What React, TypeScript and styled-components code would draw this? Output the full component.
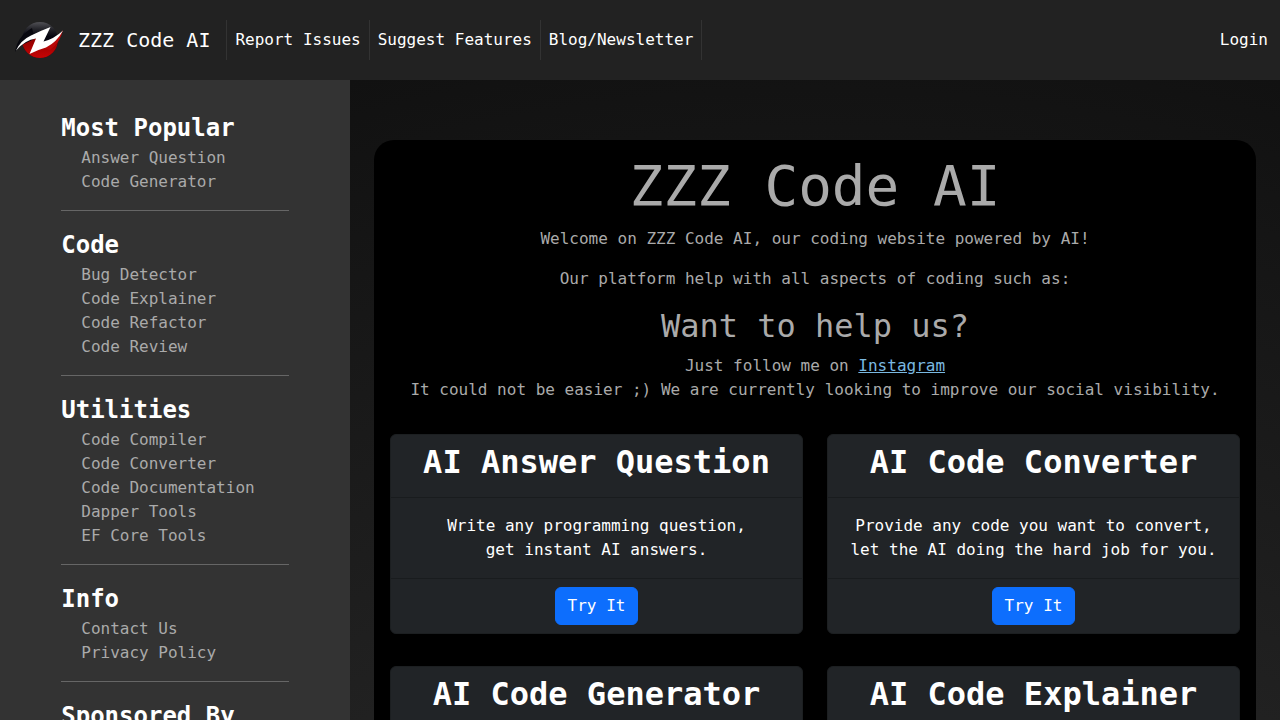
import React from "react";
import styled, { createGlobalStyle } from "styled-components";

const GlobalStyle = createGlobalStyle`
  *, *::before, *::after { box-sizing: border-box; }
  body {
    margin: 0;
    background: #111;
    color: #aaa;
    font-family: "DejaVu Sans Mono", "Liberation Mono", monospace;
    font-size: 16px;
    line-height: 24px;
  }
  h1, h2, h3, p, ul { margin: 0; padding: 0; font-weight: 400; }
  ul { list-style: none; }
`;

const Page = styled.div`
  display: flex;
  flex-direction: column;
  min-height: 100vh;
`;

const Header = styled.header`
  display: flex;
  flex: none;
  align-items: center;
  padding: 20px 12px 20px 14px;
  background: #222;
`;

const Brand = styled.a`
  display: flex;
  align-items: center;
  gap: 12px;
  margin-right: 16px;
  color: #fff;
  font-size: 20px;
  line-height: 23px;
  text-decoration: none;
`;

const Logo = styled.svg`
  display: block;
  width: 52px;
  height: 40px;
`;

const NavList = styled.ul`
  display: flex;
  flex: 1;
`;

const NavItem = styled.li`
  border-right: 1px solid #333;
  &:first-child { border-left: 1px solid #333; }
`;

const NavLink = styled.a`
  display: block;
  padding: 8px;
  color: #fff;
  text-decoration: none;
`;

const LoginLink = styled.a`
  color: #fff;
  text-decoration: none;
`;

const Columns = styled.div`
  display: flex;
  flex: 1;
  align-items: stretch;
`;

const Sidebar = styled.nav`
  flex: none;
  width: 350px;
  padding: 30px 0;
  background: #333;
`;

const MenuSection = styled.section`
  width: 65%;
  margin: 0 auto;
  & + & {
    margin-top: 16px;
    padding-top: 16px;
    border-top: 1px solid #666;
  }
`;

const MenuTitle = styled.h2`
  color: #fff;
  font-size: 24px;
  font-weight: 700;
  line-height: 36px;
`;

const MenuList = styled.ul`
  padding-left: 20px;
`;

const MenuLink = styled.a`
  color: #aaa;
  text-decoration: none;
`;

const Main = styled.main`
  flex: 1;
  min-width: 0;
  padding: 60px 24px;
  background: radial-gradient(circle 1666px at 50% 1600px, #3d3d3d, #111);
`;

const Panel = styled.div`
  padding: 12px 16px 32px;
  border-radius: 20px;
  background: #000;
  text-align: center;
`;

const Title = styled.h1`
  margin-bottom: 8px;
  font-size: 56px;
  line-height: 67px;
`;

const Subtitle = styled.h2`
  margin-bottom: 8px;
  font-size: 32px;
  line-height: 39px;
`;

const Paragraph = styled.p`
  margin-bottom: 16px;
`;

const TextLink = styled.a`
  color: #7ab8e0;
`;

const CardGrid = styled.div`
  display: grid;
  grid-template-columns: repeat(2, minmax(0, 1fr));
  gap: 32px 24px;
  margin-top: 32px;
`;

const CardBox = styled.article`
  border: 1px solid #1c1f21;
  border-radius: 6px;
  background: #212427;
  color: #fff;
`;

const CardHeader = styled.div`
  padding: 8px 16px 16px;
  border-bottom: 1px solid #191c1e;
`;

const CardTitle = styled.h3`
  font-size: 32px;
  font-weight: 700;
  line-height: 38px;
`;

const CardBody = styled.p`
  padding: 16px 8px;
`;

const CardFooter = styled.div`
  padding: 8px 16px;
  border-top: 1px solid #191c1e;
`;

const TryButton = styled.button`
  display: inline-block;
  padding: 6px 12px;
  border: 1px solid #0d6efd;
  border-radius: 6px;
  background: #0d6efd;
  color: #fff;
  font: inherit;
  vertical-align: top;
  cursor: pointer;
`;

const navItems = ["Report Issues", "Suggest Features", "Blog/Newsletter"];

const menu = [
  { title: "Most Popular", links: ["Answer Question", "Code Generator"] },
  { title: "Code", links: ["Bug Detector", "Code Explainer", "Code Refactor", "Code Review"] },
  {
    title: "Utilities",
    links: ["Code Compiler", "Code Converter", "Code Documentation", "Dapper Tools", "EF Core Tools"],
  },
  { title: "Info", links: ["Contact Us", "Privacy Policy"] },
  { title: "Sponsored By", links: [] },
];

interface CardData {
  title: string;
  lines: string[];
}

const cards: CardData[] = [
  { title: "AI Answer Question", lines: ["Write any programming question,", "get instant AI answers."] },
  { title: "AI Code Converter", lines: ["Provide any code you want to convert,", "let the AI doing the hard job for you."] },
  { title: "AI Code Generator", lines: [] },
  { title: "AI Code Explainer", lines: [] },
];

function BrandLogo() {
  return (
    <Logo viewBox="0 0 52 40" aria-hidden="true">
      <defs>
        <linearGradient id="ballTop" x1="0" y1="0" x2="0" y2="1">
          <stop offset="0" stopColor="#505055" />
          <stop offset="0.2" stopColor="#24242a" />
          <stop offset="0.4" stopColor="#05050f" />
        </linearGradient>
        <linearGradient id="ballBottom" x1="0" y1="0" x2="0" y2="1">
          <stop offset="0" stopColor="#8a0000" />
          <stop offset="1" stopColor="#cc0505" />
        </linearGradient>
        <clipPath id="ball">
          <circle cx="26" cy="20" r="18" />
        </clipPath>
      </defs>
      <circle cx="26" cy="20" r="18" fill="url(#ballTop)" />
      <path d="M6 26 L22 18 L29 26 L48 17 V40 H6Z" fill="url(#ballBottom)" clipPath="url(#ball)" />
      <path d="M1 32 Q3 17 18 8 L20 16 Q8 20 1 32Z" fill="#08080f" />
      <path d="M49 10 Q46 23 36 30 L30 28 Q42 22 49 10Z" fill="#b80808" />
      <path
        d="M2 30.500 Q7 20 17 15.500 Q26 11 36.500 7 L29.500 21.500 Q40 19 49 10.500 Q43 22 32 27.500 Q23 30 15.500 34 L22 18.500 Q11 20 2 30.500Z"
        fill="#fff"
      />
    </Logo>
  );
}

function Card({ title, lines }: CardData) {
  return (
    <CardBox>
      <CardHeader>
        <CardTitle>{title}</CardTitle>
      </CardHeader>
      <CardBody>
        {lines.map((line, index) => (
          <React.Fragment key={line}>
            {index > 0 && <br />}
            {line}
          </React.Fragment>
        ))}
      </CardBody>
      <CardFooter>
        <TryButton type="button">Try It</TryButton>
      </CardFooter>
    </CardBox>
  );
}

export default function App() {
  return (
    <Page>
      <GlobalStyle />
      <Header>
        <Brand href="#">
          <BrandLogo />
          ZZZ Code AI
        </Brand>
        <NavList>
          {navItems.map((item) => (
            <NavItem key={item}>
              <NavLink href="#">{item}</NavLink>
            </NavItem>
          ))}
        </NavList>
        <LoginLink href="#">Login</LoginLink>
      </Header>
      <Columns>
        <Sidebar>
          {menu.map((section) => (
            <MenuSection key={section.title}>
              <MenuTitle>{section.title}</MenuTitle>
              <MenuList>
                {section.links.map((link) => (
                  <li key={link}>
                    <MenuLink href="#">{link}</MenuLink>
                  </li>
                ))}
              </MenuList>
            </MenuSection>
          ))}
        </Sidebar>
        <Main>
          <Panel>
            <Title>ZZZ Code AI</Title>
            <Paragraph>Welcome on ZZZ Code AI, our coding website powered by AI!</Paragraph>
            <Paragraph>Our platform help with all aspects of coding such as:</Paragraph>
            <Subtitle>Want to help us?</Subtitle>
            <p>
              Just follow me on <TextLink href="#">Instagram</TextLink>
              <br />
              It could not be easier ;) We are currently looking to improve our social visibility.
            </p>
            <CardGrid>
              {cards.map((card) => (
                <Card key={card.title} {...card} />
              ))}
            </CardGrid>
          </Panel>
        </Main>
      </Columns>
    </Page>
  );
}
